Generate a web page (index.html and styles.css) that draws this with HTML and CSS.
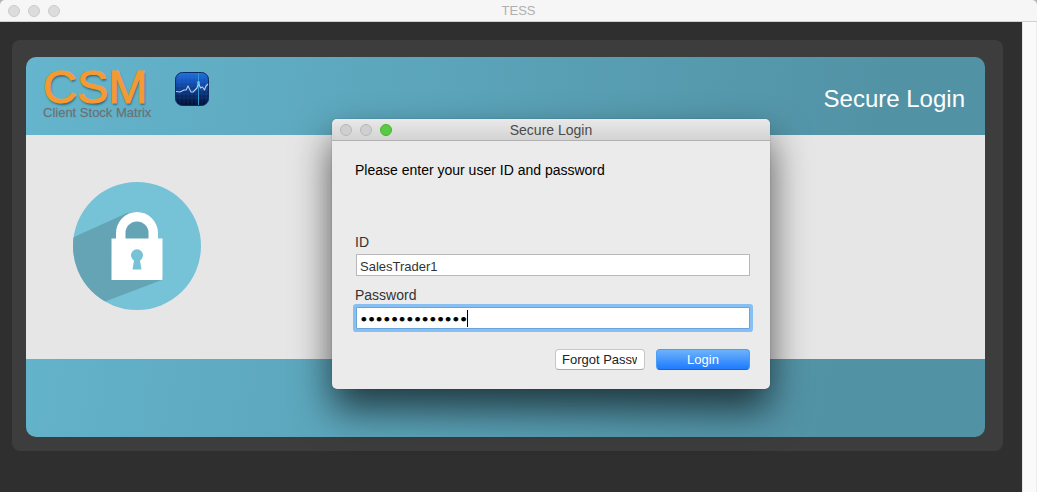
FILE: index.html
```html
<!DOCTYPE html>
<html lang="en">
<head>
    <meta charset="UTF-8">
    <meta name="viewport" content="width=device-width, initial-scale=1.0">
    <title>TESS</title>
    <link rel="stylesheet" href="styles.css">
</head>
<body>
    <header class="titlebar">
        <div class="dots"><span></span><span></span><span></span></div>
        <span class="titlebar-text">TESS</span>
    </header>

    <div class="window">
        <main class="frame">
            <div class="card">
                <div class="card-header">
                    <div class="brand">
                        <div class="brand-text">
                            <span class="brand-name">CSM</span>
                            <span class="brand-sub">Client Stock Matrix</span>
                        </div>
                        <svg class="brand-icon" viewBox="0 0 34 34" aria-hidden="true">
                            <defs>
                                <linearGradient id="iconBg" x1="0" y1="0" x2="0" y2="1">
                                    <stop offset="0" stop-color="#2273dc"/>
                                    <stop offset="0.3" stop-color="#1450b4"/>
                                    <stop offset="0.7" stop-color="#082a66"/>
                                    <stop offset="1" stop-color="#03102e"/>
                                </linearGradient>
                            </defs>
                            <rect x="0.5" y="0.5" width="33" height="33" rx="7" fill="url(#iconBg)" stroke="#0d2c63"/>
                            <path d="M5 1v32M9 1v32M13 1v32M17 1v32M21 1v32M27 1v32M31 1v32M1 6h32M1 10h32M1 14h32M1 18h32M1 22h32M1 26h32" stroke="#3c8cf0" stroke-width="0.5" opacity="0.25"/>
                            <path d="M23.500 1v32" stroke="#2f9ad2" stroke-width="1"/>
                            <path d="M1 19.500L5 20l4-2 2 0 2-4 3 6 2 0 4-4 1.500-5 2 5 2-1 2 3 1.500-4 2-2" fill="none" stroke="#b9cdf0" stroke-width="1.100" stroke-linejoin="round"/>
                            <circle cx="23.500" cy="10.500" r="1.500" fill="#4cc8f4"/>
                        </svg>
                    </div>
                    <h1>Secure Login</h1>
                </div>

                <div class="card-body">
                    <svg class="lock" viewBox="0 0 128 128" aria-hidden="true">
                        <defs>
                            <clipPath id="disc"><circle cx="64" cy="64" r="64"/></clipPath>
                        </defs>
                        <circle cx="64" cy="64" r="64" fill="#76c2d7"/>
                        <path d="M0 55.500L54 31l10 -1 18 26L90 97.500 32 119.500 0 128z" fill="#64a4b5" clip-path="url(#disc)"/>
                        <path d="M38.500 56.500H43V51a21 21 0 0 1 42 0v5.500h4.500V98h-51z" fill="#fff"/>
                        <path d="M52.500 56.500V51a11.500 11.500 0 0 1 23 0v5.500z" fill="#64a4b5"/>
                        <path d="M61 78.500a6 6 0 1 1 6 0L68.500 87.500h-9z" fill="#76c2d7"/>
                    </svg>
                </div>

                <div class="card-footer"></div>
            </div>
        </main>
        <div class="scrollbar"></div>
    </div>

    <section class="dialog" role="dialog" aria-labelledby="dialogTitle">
        <div class="dialog-bar">
            <div class="dots"><span></span><span></span><span class="green"></span></div>
            <h2 id="dialogTitle">Secure Login</h2>
        </div>
        <form class="login-form">
            <p>Please enter your user ID and password</p>

            <label for="userId">ID</label>
            <input type="text" id="userId" name="userId" value="SalesTrader1">

            <label for="password">Password</label>
            <div class="password-field">
                <input type="password" id="password" name="password" value="tradersecret14">
                <span class="caret"></span>
            </div>

            <div class="buttons">
                <button type="button" class="btn-forgot"><span>Forgot Password</span></button>
                <button type="submit" class="btn-login">Login</button>
            </div>
        </form>
    </section>
</body>
</html>
```

FILE: styles.css
```css
* {
    box-sizing: border-box;
}

html {
    background-color: #b4b4b4;
}

body {
    font-family: "Liberation Sans", Arial, sans-serif;
    font-size: 13px;
    margin: 0;
    min-height: 100vh;
    display: flex;
    flex-direction: column;
    position: relative;
}

h1, h2, p {
    margin: 0;
    font-weight: normal;
}

/* main window */
.titlebar {
    display: grid;
    grid-template-columns: 1fr auto 1fr;
    align-items: center;
    height: 22px;
    padding: 0 8px;
    background-color: #f6f6f6;
    border-bottom: 1px solid #d0d0d0;
    border-radius: 5px 5px 0 0;
}

.titlebar-text {
    color: #b0b0b0;
}

.dots {
    display: flex;
    gap: 8px;
}

.dots span {
    width: 12px;
    height: 12px;
    border-radius: 50%;
    background-color: #dcdcdc;
    border: 1px solid #cbcbcb;
}

.window {
    flex: 1;
    display: flex;
    background-color: #2f2f2f;
}

.scrollbar {
    width: 15px;
    background-color: #fafafa;
    border-left: 1px solid #e6e6e6;
    border-right: 1px solid #ececec;
}

.frame {
    flex: 1;
    margin: 18px 19px 41px 12px;
    padding: 17px 18px 14px 14px;
    background-color: #3d3d3d;
    border-radius: 8px;
}

.card {
    height: 100%;
    display: flex;
    flex-direction: column;
    border-radius: 10px;
    overflow: hidden;
    background: linear-gradient(100deg, #64b5cd, #5292a5 85%);
}

.card-header {
    display: flex;
    justify-content: space-between;
    min-height: 78px;
    padding: 0 20px 0 17px;
}

.card-header h1 {
    color: #fff;
    font-size: 24px;
    line-height: 28px;
    margin-top: 28px;
}

.brand {
    display: flex;
    gap: 16px;
    padding-top: 12px;
}

.brand-text {
    display: flex;
    flex-direction: column;
    min-width: 116px;
}

.brand-name {
    color: #f59a33;
    font-size: 47px;
    line-height: 35px;
    -webkit-text-stroke: 1px #f59a33;
    text-shadow: 1px 2px 2px rgba(40, 70, 80, 0.7);
}

.brand-sub {
    color: #6b7073;
    font-size: 13px;
    line-height: 18px;
    -webkit-text-stroke: 1px rgba(107, 112, 115, 0.2);
}

.brand-icon {
    width: 34px;
    height: 34px;
    margin-top: 3px;
}

.card-body {
    flex: 1;
    padding: 47px;
    background-color: #e6e6e6;
}

.lock {
    display: block;
    width: 128px;
    height: 128px;
}

.card-footer {
    min-height: 78px;
}

/* login dialog */
.dialog {
    position: absolute;
    top: 119px;
    left: 332px;
    width: 438px;
    background-color: #ebebeb;
    border-radius: 5px;
    box-shadow: 0 0 1px rgba(0, 0, 0, 0.5), 0 20px 38px rgba(0, 0, 0, 0.65);
}

.dialog-bar {
    display: grid;
    grid-template-columns: 1fr auto 1fr;
    align-items: center;
    height: 22px;
    padding: 0 8px;
    background: linear-gradient(#e9e9e9, #d3d3d3);
    border-bottom: 1px solid #b1b1b1;
    border-radius: 5px 5px 0 0;
}

.dialog-bar .dots span {
    background-color: #cfcfcf;
    border-color: #b8b8b8;
}

.dialog-bar .dots .green {
    background-color: #57cb43;
    border-color: #45b52f;
}

.dialog-bar h2 {
    color: #4a4a4a;
    font-size: 14px;
}

.login-form {
    display: flex;
    flex-direction: column;
    padding: 19px 20px 19px 24px;
}

.login-form p {
    line-height: 20px;
    margin: 0 0 52px -1px;
    color: #000;
    font-size: 14px;
}

.login-form label {
    line-height: 20px;
    margin: 0 0 2px -1px;
    color: #333;
    font-size: 14px;
}

.login-form input {
    height: 22px;
    margin-bottom: 9px;
    padding: 2px 3px 0;
    border: 1px solid #b9b9b9;
    background-color: #fff;
    color: #333;
    font-family: inherit;
    font-size: 13px;
    outline: none;
}

.password-field {
    position: relative;
    display: flex;
    margin-bottom: 20px;
}

.login-form input[type="password"] {
    flex: 1;
    margin-bottom: 0;
    border-color: #69a5dc;
    border-radius: 1px;
    box-shadow: 0 0 0 3px #87bff2;
    color: #000;
    font-family: "DejaVu Sans", sans-serif;
    -webkit-text-stroke: 1px #000;
}

.caret {
    position: absolute;
    top: 3px;
    left: 111px;
    width: 1px;
    height: 17px;
    background-color: #000;
}

.buttons {
    display: flex;
    justify-content: flex-end;
    gap: 11px;
}

.buttons button {
    height: 21px;
    border-radius: 4px;
    font-family: inherit;
    font-size: 13px;
    line-height: 19px;
}

.btn-forgot {
    width: 90px;
    padding: 0 7px 0 6px;
    background-color: #fff;
    border: 1px solid #c6c6c6;
    border-bottom-color: #a9a9a9;
    color: #222;
}

.btn-forgot span {
    display: block;
    overflow: hidden;
    white-space: nowrap;
    text-align: left;
}

.btn-login {
    width: 94px;
    padding: 0;
    background: linear-gradient(#6bb3fa, #1f7bff);
    border: 1px solid #4a9cf5;
    border-bottom-color: #1762e8;
    color: #fff;
}
```
